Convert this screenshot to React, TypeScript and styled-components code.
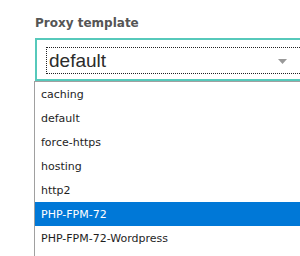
import React from "react";
import styled, { createGlobalStyle } from "styled-components";

const Global = createGlobalStyle`
  html, body {
    margin: 0;
    padding: 0;
    background: #ffffff;
    overflow: hidden;
  }
`;

const Page = styled.div`
  width: 300px;
  height: 256px;
  overflow: hidden;
  padding: 16px 0 0 34px;
  box-sizing: border-box;
`;

const Field = styled.div`
  width: 280px;
  display: flex;
  flex-direction: column;
`;

const Label = styled.div`
  font-family: "DejaVu Sans", sans-serif;
  font-weight: bold;
  font-size: 12px;
  line-height: 14px;
  color: #555555;
  margin: 0 0 8px 1px;
`;

const SelectBox = styled.div`
  margin-left: 1px;
  height: 43px;
  box-sizing: border-box;
  border: 2px solid #56c9bb;
  padding: 7px 0 5px 9px;
`;

const Focus = styled.div`
  height: 27px;
  box-sizing: border-box;
  border: 1px dotted #222222;
  padding: 0 24px 0 2px;
  display: flex;
  align-items: center;
`;

const Value = styled.span`
  flex: 1;
  font-family: "Liberation Sans", Arial, sans-serif;
  font-size: 19px;
  line-height: 25px;
  color: #2b2b2b;
`;

const Caret = styled.svg`
  width: 9px;
  height: 5px;
  display: block;
  margin-top: 1px;
  flex: none;
`;

const List = styled.ul`
  list-style: none;
  margin: 0;
  padding: 0 0 20px;
  border-top: 1px solid #a0a0a0;
  border-left: 1px solid #a0a0a0;
`;

const Option = styled.li<{ $active?: boolean }>`
  height: 24px;
  box-sizing: border-box;
  padding: 1px 0 0 6px;
  line-height: 23px;
  font-family: "DejaVu Sans", Tahoma, sans-serif;
  font-size: 11px;
  white-space: nowrap;
  color: ${(p) => (p.$active ? "#ffffff" : "#1e1e1e")};
  background: ${(p) => (p.$active ? "#0078d7" : "#ffffff")};
`;

const options = [
  "caching",
  "default",
  "force-https",
  "hosting",
  "http2",
  "PHP-FPM-72",
  "PHP-FPM-72-Wordpress",
];

export default function App() {
  return (
    <>
      <Global />
      <Page>
        <Field>
          <Label>Proxy template</Label>
          <SelectBox>
            <Focus>
              <Value>default</Value>
              <Caret viewBox="0 0 9 5">
                <path d="M0 0 H9 L4.5 5 Z" fill="#999999" />
              </Caret>
            </Focus>
          </SelectBox>
          <List>
            {options.map((o) => (
              <Option key={o} $active={o === "PHP-FPM-72"}>
                {o}
              </Option>
            ))}
          </List>
        </Field>
      </Page>
    </>
  );
}
